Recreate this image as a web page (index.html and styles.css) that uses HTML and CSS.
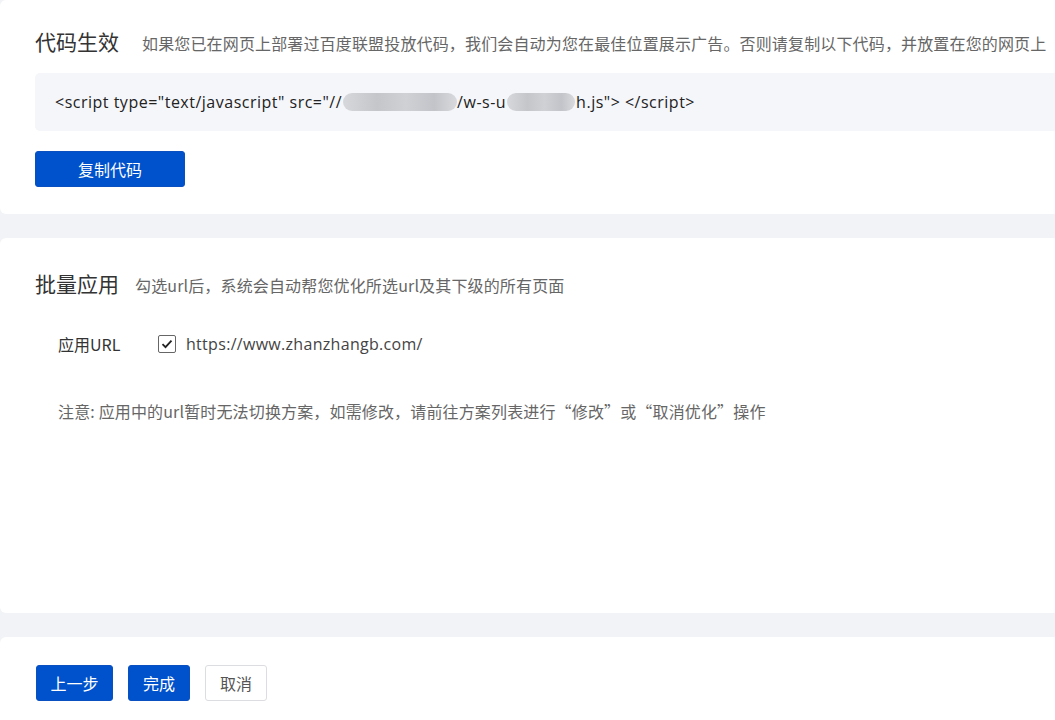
FILE: index.html
```html
<!DOCTYPE html>
<html lang="zh-CN">
<head>
<meta charset="utf-8">
<title>代码生效</title>
<link rel="stylesheet" href="styles.css">
</head>
<body>
<div class="page">
  <section class="card card-code">
    <div class="head">
      <h2 class="title">代码生效</h2>
      <span class="desc">如果您已在网页上部署过百度联盟投放代码，我们会自动为您在最佳位置展示广告。否则请复制以下代码，并放置在您的网页上</span>
    </div>
    <div class="codebox">&lt;script type="text/javascript" src="//<span class="blur b1"></span>/w-s-u<span class="blur b2"></span>h.js"&gt; &lt;/script&gt;</div>
    <button class="btn btn-primary btn-copy">复制代码</button>
  </section>
  <section class="card card-batch">
    <div class="head">
      <h2 class="title">批量应用</h2>
      <span class="desc">勾选url后，系统会自动帮您优化所选url及其下级的所有页面</span>
    </div>
    <div class="row">
      <span class="label">应用URL</span>
      <span class="check"><svg width="12" height="10" viewBox="0 0 12 10"><path d="M1.5 5.2 L4.5 8.2 L10.5 1.6" fill="none" stroke="#222" stroke-width="1.8"/></svg></span>
      <span class="url">https://www.zhanzhangb.com/</span>
    </div>
    <p class="note">注意: 应用中的url暂时无法切换方案，如需修改，请前往方案列表进行“修改”或“取消优化”操作</p>
  </section>
  <section class="card card-actions">
    <button class="btn btn-primary btn-prev">上一步</button>
    <button class="btn btn-primary btn-done">完成</button>
    <button class="btn btn-default btn-cancel">取消</button>
  </section>
</div>
</body>
</html>
```
FILE: styles.css
```css
html, body {
  margin: 0;
  padding: 0;
  background: #f2f3f7;
}
body {
  font-family: "Noto Sans CJK SC", "Noto Sans", sans-serif;
  color: #333;
  width: 1055px;
  height: 720px;
  overflow: hidden;
}
.page {
  display: flex;
  flex-direction: column;
  gap: 24px;
  width: 1080px;
}
.card {
  background: #fff;
  border-radius: 6px;
  padding: 0 0 0 35px;
  box-sizing: border-box;
}
.card-code {
  height: 214px;
  padding-top: 26px;
}
.card-batch {
  height: 375px;
  padding-top: 30px;
}
.card-actions {
  height: 100px;
  padding-top: 28px;
  padding-left: 36px;
  display: flex;
  gap: 15px;
  align-items: flex-start;
}
.head {
  display: flex;
  align-items: baseline;
  white-space: nowrap;
}
.title {
  margin: 0;
  font-size: 21px;
  font-weight: 400;
  color: #333;
  line-height: 30px;
}
.card-code .desc { margin-left: 23px; }
.card-batch .desc { margin-left: 16px; }
.desc {
  font-size: 16px;
  letter-spacing: 0.15px;
  color: #666;
}
.codebox {
  margin-top: 17px;
  height: 58px;
  background: #f5f6fa;
  border-radius: 5px 0 0 5px;
  padding-left: 20px;
  display: flex;
  align-items: center;
  font-family: "Open Sans", "Noto Sans", sans-serif;
  font-size: 16px;
  letter-spacing: 0.5px;
  color: #222;
  white-space: pre;
}
.blur {
  display: inline-block;
  height: 18px;
  border-radius: 9px;
  background: linear-gradient(90deg, #d6d8dc 0%, #c4c6ca 30%, #cfd1d5 55%, #c2c4c9 80%, #d8dadd 100%);
  vertical-align: middle;
}
.b1 { width: 114px; margin-left: 1px; }
.b2 { width: 68px; margin: 0 1px; }
.btn {
  font-family: "Noto Sans CJK SC", sans-serif;
  font-size: 16px;
  height: 36px;
  border-radius: 3px;
  border: 1px solid transparent;
  cursor: pointer;
  padding: 0;
}
.btn-primary {
  background: #0052cc;
  color: #fff;
  border-color: #0a50c0;
}
.btn-default {
  background: #fff;
  color: #555;
  border-color: #dcdde0;
}
.btn-copy {
  margin-top: 20px;
  width: 150px;
}
.btn-prev { width: 77px; }
.btn-done { width: 62px; }
.btn-cancel { width: 62px; }
.row {
  display: flex;
  align-items: center;
  margin-top: 34px;
  padding-left: 23px;
  font-size: 16px;
  height: 24px;
}
.label {
  color: #333;
  width: 100px;
}
.check {
  width: 16px;
  height: 16px;
  border: 1px solid #666;
  border-radius: 2px;
  display: flex;
  align-items: center;
  justify-content: center;
  margin-right: 10px;
}
.url {
  font-family: "Open Sans", "Noto Sans", sans-serif;
  letter-spacing: 0.3px;
  color: #444;
}
.note {
  margin: 43px 0 0 23px;
  font-size: 16px;
  letter-spacing: 0.15px;
  color: #666;
}
```
